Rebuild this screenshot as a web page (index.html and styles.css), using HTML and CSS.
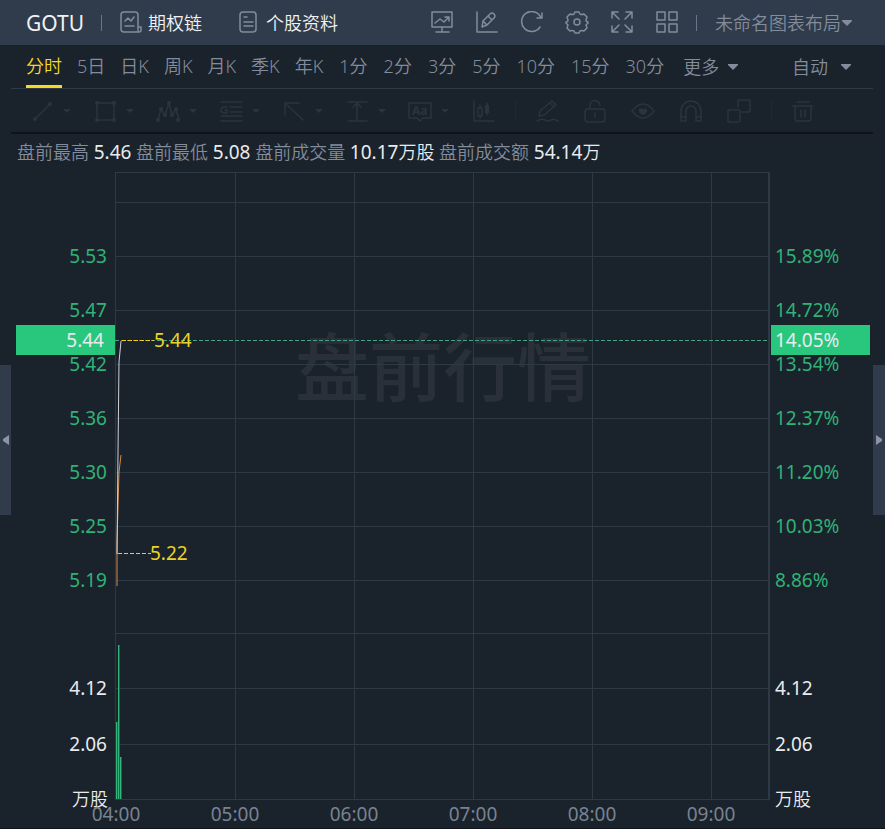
FILE: index.html
```html
<!DOCTYPE html>
<html lang="zh-CN">
<head>
<meta charset="utf-8">
<meta name="viewport" content="width=device-width, initial-scale=1">
<title>GOTU 分时</title>
<link rel="stylesheet" href="styles.css">
</head>
<body>
<svg class="defs" aria-hidden="true">
  <symbol id="caret" viewBox="0 0 12 8"><path d="M1 1h10v1L6 7 1 2z"/></symbol>
</svg>

<header class="topbar">
  <h1 class="symbol">GOTU</h1>
  <span class="bar-divider"></span>
  <a class="toplink" href="#options">
    <svg class="icon" width="24" height="24" viewBox="0 0 24 24"><path d="M19 16V4q0-3-3-3H5Q2 1 2 4v14q0 3 3 3h15q2 0 2-2v-3h-3v3q0 2 1 2M6 10l3-3 3 3 3-4M6 15h9"/></svg>
    <span>期权链</span>
  </a>
  <a class="toplink toplink-info" href="#profile">
    <svg class="icon" width="20" height="24" viewBox="0 0 20 24"><rect x="2" y="1" width="16" height="20" rx="3"/><path d="M6 6h3M6 11h9M6 15h9"/></svg>
    <span>个股资料</span>
  </a>
  <div class="actions">
    <button class="action" aria-label="模拟"><svg class="icon" width="24" height="24" viewBox="0 0 24 24"><path d="M2 1h20v15H2zM12 16v5M6 21h13M5 12l5-4 4 3 5-5M15 6h4v4"/></svg></button>
    <button class="action" aria-label="画线"><svg class="icon" width="24" height="24" viewBox="0 0 24 24"><path d="M2 1v20h20M7 16l1-6 7-7q2-2 4 0t0 4l-7 7zM13 5l4 4M8 10l4 4"/></svg></button>
    <button class="action" aria-label="刷新"><svg class="icon" width="24" height="24" viewBox="0 0 24 24"><path d="M20 16a10 10 0 1 1 1-9M22 2v5h-5"/></svg></button>
    <button class="action" aria-label="设置"><svg class="icon" width="24" height="24" viewBox="0 0 24 24"><circle cx="12" cy="11" r="3"/><path d="M10 1h4l1 2q2 1 4 0l3 3-1 3q0 2 2 2v1l-2 2 1 3-3 3q-2-1-4 0l-1 2h-4l-1-2q-2-1-4 0l-3-3 1-3-2-2v-1q2 0 2-2L2 6l3-3q2 1 4 0z"/></svg></button>
    <button class="action" aria-label="全屏"><svg class="icon" width="24" height="24" viewBox="0 0 24 24"><path d="M2 7V1h6M2 1l7 7M16 1h6v6M22 1l-7 7M2 15v6h6M2 21l7-7M22 15v6h-6M22 21l-7-7"/></svg></button>
    <button class="action" aria-label="多图"><svg class="icon" width="24" height="24" viewBox="0 0 24 24"><path d="M2 1h8v8H2zM14 1h8v8h-8zM2 13h8v8H2zM14 13h8v8h-8z"/></svg></button>
    <span class="bar-divider"></span>
    <label class="picker layout-picker">
      <select aria-label="图表布局"><option>未命名图表布局</option></select>
      <svg class="caret" width="12" height="8"><use href="#caret"/></svg>
    </label>
  </div>
</header>

<nav class="periods">
  <div class="tabs">
    <button class="tab tab-active">分时</button>
    <button class="tab">5日</button>
    <button class="tab">日K</button>
    <button class="tab">周K</button>
    <button class="tab">月K</button>
    <button class="tab">季K</button>
    <button class="tab">年K</button>
  </div>
  <div class="tabs minutes">
    <button class="tab">1分</button>
    <button class="tab">2分</button>
    <button class="tab">3分</button>
    <button class="tab">5分</button>
    <button class="tab">10分</button>
    <button class="tab">15分</button>
    <button class="tab">30分</button>
    <label class="picker more-picker">
      <select aria-label="更多周期"><option>更多</option></select>
      <svg class="caret" width="12" height="8"><use href="#caret"/></svg>
    </label>
  </div>
  <label class="picker auto-picker">
    <select aria-label="缩放"><option>自动</option></select>
    <svg class="caret" width="12" height="8"><use href="#caret"/></svg>
  </label>
</nav>

<div class="tools">
  <button class="tool" aria-label="线段"><svg class="icon" width="24" height="24" viewBox="0 0 24 24"><path d="M5 20L20 5"/><circle class="dot" cx="5" cy="20" r="2"/><circle class="dot" cx="20" cy="5" r="2"/></svg><svg class="caret" width="8" height="6"><use href="#caret"/></svg></button>
  <button class="tool" aria-label="矩形"><svg class="icon" width="24" height="24" viewBox="0 0 24 24"><path d="M4 4h17v17H4z"/><circle class="dot" cx="4" cy="4" r="2"/><circle class="dot" cx="21" cy="4" r="2"/><circle class="dot" cx="4" cy="21" r="2"/><circle class="dot" cx="21" cy="21" r="2"/></svg><svg class="caret" width="8" height="6"><use href="#caret"/></svg></button>
  <button class="tool" aria-label="形态"><svg class="icon" width="24" height="24" viewBox="0 0 24 24"><path d="M2 21L5 10l4 6 4-12 3 12 4-6 3 11"/><circle class="dot" cx="2" cy="21" r="2"/><circle class="dot" cx="5" cy="10" r="2"/><circle class="dot" cx="9" cy="16" r="2"/><circle class="dot" cx="13" cy="4" r="2"/><circle class="dot" cx="16" cy="16" r="2"/><circle class="dot" cx="20" cy="10" r="2"/><circle class="dot" cx="22" cy="21" r="2"/></svg><svg class="caret" width="8" height="6"><use href="#caret"/></svg></button>
  <button class="tool" aria-label="江恩"><svg class="icon" width="24" height="24" viewBox="0 0 24 24"><path d="M2 3h21M11 8h12M11 13h12M2 17h21M2 22h21M8 8H5Q2 8 2 11t3 3h3v-3H6"/></svg><svg class="caret" width="8" height="6"><use href="#caret"/></svg></button>
  <button class="tool" aria-label="箭头"><svg class="icon" width="24" height="24" viewBox="0 0 24 24"><path d="M3 16V4h14M3 4l18 17"/></svg><svg class="caret" width="8" height="6"><use href="#caret"/></svg></button>
  <button class="tool" aria-label="测量"><svg class="icon" width="24" height="24" viewBox="0 0 24 24"><path d="M3 3h19M3 22h19M12 22V4M8 8l4-4 4 4"/></svg><svg class="caret" width="8" height="6"><use href="#caret"/></svg></button>
  <button class="tool" aria-label="文字"><svg class="icon" width="24" height="24" viewBox="0 0 24 24"><path d="M1 4h22v15h-8l-3 3-3-3H1z"/><text class="tool-letter" x="4" y="16">Aa</text></svg><svg class="caret" width="8" height="6"><use href="#caret"/></svg></button>
  <button class="tool tool-last" aria-label="K线"><svg class="icon" width="24" height="24" viewBox="0 0 24 24"><path d="M3 2v20h20M9 6v3M9 17v2M16 4v2M16 14v2M7 9h4v8H7z"/><path class="dot" d="M14 6h4v8h-4z"/></svg></button>
  <span class="tool-divider divider-first"></span>
  <button class="tool-plain" aria-label="画笔"><svg class="icon" width="24" height="24" viewBox="0 0 24 24"><path d="M4 17l1-5L17 2l4 4L9 16zM15 4l4 4M2 22q4-3 8-1t6 0 7 1"/></svg></button>
  <button class="tool-plain" aria-label="锁定"><svg class="icon" width="24" height="24" viewBox="0 0 24 24"><rect x="2" y="10" width="20" height="13" rx="3"/><path d="M7 10V7a5 5 0 0 1 10-1M12 14v4"/></svg></button>
  <button class="tool-plain" aria-label="显示"><svg class="icon" width="24" height="24" viewBox="0 0 24 24"><path d="M1 12q11-14 22 0-11 14-22 0z"/><path class="dot" d="M9 9q2 2 3 0 1 2 3 0a4 4 0 1 1-6 0z"/></svg></button>
  <button class="tool-plain" aria-label="磁铁"><svg class="icon" width="24" height="24" viewBox="0 0 24 24"><path d="M2 22V12a10 10 0 0 1 20 0v10h-5V12a5 5 0 0 0-10 0v10zM2 18h5M17 18h5"/></svg></button>
  <button class="tool-plain" aria-label="复制"><svg class="icon" width="24" height="24" viewBox="0 0 24 24"><rect x="1" y="11" width="12" height="12" rx="1"/><path d="M11 8V2q0-1 1-1h10q1 0 1 1v10q0 1-1 1h-7"/></svg></button>
  <span class="tool-divider"></span>
  <button class="tool-plain" aria-label="删除"><svg class="icon" width="24" height="24" viewBox="0 0 24 24"><path d="M6 3h12M2 7h20M4 7v12q0 3 3 3h10q3 0 3-3V7M10 11v7M14 11v7"/></svg></button>
</div>

<p class="quote">盘前最高 <b>5.46</b> 盘前最低 <b>5.08</b> 盘前成交量 <b>10.17<span>万股</span></b> 盘前成交额 <b>54.14<span>万</span></b></p>

<main class="chart-area">
  <svg class="chart" viewBox="0 0 885 657" role="img" aria-label="GOTU 盘前分时走势">
    <text class="watermark" x="295" y="223">盘前行情</text>
    <path class="grid" d="M115 0h654v1H115zM115 30h654v1H115zM115 84h654v1H115zM115 138h654v1H115zM115 192h654v1H115zM115 246h654v1H115zM115 300h654v1H115zM115 354h654v1H115zM115 408h654v1H115zM115 461h654v1H115zM115 516h654v1H115zM115 572h654v1H115zM115 627h654v1H115z"/>
    <path class="grid" d="M115 0h1v628h-1zM235 0h1v628h-1zM354 0h1v628h-1zM473 0h1v628h-1zM592 0h1v628h-1zM711 0h1v628h-1zM768 0h2v628h-2z"/>
    <path class="volume" d="M116 550h1v77h-1zM118 473h1v154h-1zM120 585h1v42h-1z"/>
    <path class="volume-edge" d="M117 550h1v77h-1zM119 473h1v154h-1zM121 585h1v42h-1z"/>
    <polyline class="average" points="117,414 117,370 119,300 121,283"/>
    <polyline class="price" points="117,382 118,280 119,190 121,169"/>
    <g class="dashes">
      <path class="dash-last" d="M115 168H768"/>
      <path class="dash-mark" d="M122 168H154M118 381H151"/>
    </g>
    <g class="mark"><text x="154" y="175">5.44</text><text x="150" y="388">5.22</text></g>
    <g class="up left">
      <text x="107" y="91">5.53</text><text x="107" y="145">5.47</text><text x="107" y="199">5.42</text><text x="107" y="253">5.36</text><text x="107" y="307">5.30</text><text x="107" y="361">5.25</text><text x="107" y="415">5.19</text>
    </g>
    <g class="up">
      <text x="775" y="91">15.89%</text><text x="775" y="145">14.72%</text><text x="775" y="199">13.54%</text><text x="775" y="253">12.37%</text><text x="775" y="307">11.20%</text><text x="775" y="361">10.03%</text><text x="775" y="415">8.86%</text>
    </g>
    <rect class="tag" x="16" y="153" width="99" height="30"/>
    <rect class="tag" x="771" y="153" width="99" height="30"/>
    <g class="bright">
      <text class="end" x="104" y="175">5.44</text><text x="775" y="175">14.05%</text>
      <text class="end" x="107" y="523">4.12</text><text class="end" x="107" y="579">2.06</text><text class="end unit" x="108" y="634">万股</text>
      <text x="775" y="523">4.12</text><text x="775" y="579">2.06</text><text class="unit" x="775" y="634">万股</text>
    </g>
    <g class="hours">
      <text x="116" y="649">04:00</text><text x="235" y="649">05:00</text><text x="354" y="649">06:00</text><text x="473" y="649">07:00</text><text x="592" y="649">08:00</text><text x="711" y="649">09:00</text>
    </g>
    <rect class="base" x="0" y="656" width="885" height="1"/>
  </svg>
</main>

<button class="handle handle-left" aria-label="展开左栏"><svg width="6" height="10" viewBox="0 0 6 10"><path d="M6 0v10L0 6V4z"/></svg></button>
<button class="handle handle-right" aria-label="展开右栏"><svg width="6" height="10" viewBox="0 0 6 10"><path d="M0 0v10l6-4V4z"/></svg></button>
</body>
</html>
```
FILE: styles.css
```css
* { box-sizing: border-box; }

body {
  position: relative;
  margin: 0;
  background: #1a222b;
  color: #828c9c;
  font-family: "Noto Sans", "Noto Sans CJK SC", sans-serif;
  font-size: 18px;
  font-weight: 350;
  line-height: 24px;
}

button, select {
  margin: 0;
  padding: 0;
  border: 0;
  background: none;
  color: inherit;
  font: inherit;
  appearance: none;
}

svg { display: block; }
.defs { position: absolute; width: 0; height: 0; }

.icon {
  flex: none;
  fill: none;
  stroke: currentColor;
  stroke-width: 1.5;
  stroke-linecap: round;
  stroke-linejoin: round;
}

.icon .dot { fill: currentColor; stroke: none; }
.caret { flex: none; fill: currentColor; }

.topbar {
  display: flex;
  align-items: center;
  height: 45px;
  padding: 0 32px 0 26px;
  background: #303b4b;
}

.symbol {
  margin: 0;
  color: #f0f2f5;
  font-size: 21px;
  font-weight: 400;
}

.bar-divider { width: 1px; height: 16px; background: #69758a; }
.symbol + .bar-divider { margin: 0 17px; }

.toplink {
  display: flex;
  align-items: center;
  gap: 5px;
  color: #828c9c;
  text-decoration: none;
}

.toplink span { color: #f0f2f5; }
.toplink-info { margin-left: 36px; gap: 8px; }

.actions { display: flex; align-items: center; margin-left: auto; }
.action { display: flex; justify-content: center; width: 45px; }
.actions .bar-divider { margin: 0 18px 0 7px; }

.picker { display: flex; align-items: center; }

.periods {
  display: flex;
  height: 44px;
  margin: 0 12px 0 11px;
  padding: 0 21px 0 15px;
  border-bottom: 1px solid #2e3a48;
}

.tabs { display: flex; gap: 15px; margin-right: 16px; }
.minutes { gap: 16px; margin-right: 0; }

.tab {
  height: 43px;
  padding-top: 1px;
  border-bottom: 3px solid transparent;
  font-weight: 400;
  white-space: nowrap;
}

.tab:lang(zh) { font-weight: 350; }
.tab-active { border-color: #f5da22; color: #f5da22; }
.more-picker, .auto-picker { gap: 8px; }
.more-picker { margin-left: 3px; }
.auto-picker { gap: 12px; margin-left: auto; }

.tools {
  display: flex;
  align-items: center;
  height: 45px;
  margin: 0 12px 0 11px;
  padding-left: 19px;
  border-bottom: 2px solid #0f1319;
  color: #2b333f;
}

.tool {
  display: flex;
  flex: none;
  align-items: center;
  gap: 9px;
  width: 63px;
}

.tool-last { width: 24px; }
.tool-plain { display: flex; flex: none; justify-content: center; width: 48px; }
.tool-letter { fill: currentColor; stroke: none; font-size: 12px; font-weight: 700; }
.tool-divider { width: 1px; height: 20px; margin: 0 7px 0 8px; background: #202832; }
.divider-first { margin-left: 20px; }

.quote { margin: 0; padding: 6px 17px 8px; white-space: nowrap; }
.quote b { color: #e9ebee; font-size: 19px; font-weight: 400; }
.quote span { font-size: 18px; font-weight: 350; }

.chart { width: 100%; height: auto; font-size: 19px; font-weight: 400; }
.watermark { fill: #2a303a; font-size: 74px; font-weight: 500; }
.grid { fill: #2d3945; }
.volume { fill: #35b57c; }
.volume-edge { fill: #216548; }
.average { fill: none; stroke: #d48a49; }
.price { fill: none; stroke: #d0d2d6; }
.dashes { stroke-dasharray: 4 2; shape-rendering: crispEdges; }
.dash-last { stroke: #43a383; }
.dash-mark { fill: none; stroke: #e8cf25; }
.mark { fill: #ecd226; }
.up { fill: #30b277; }
.left, .end { text-anchor: end; }
.tag { fill: #29c77e; }
.bright { fill: #e9ebee; }
.unit { font-size: 18px; font-weight: 350; }
.hours { fill: #788292; text-anchor: middle; }
.base { fill: #10151c; }

.handle {
  position: absolute;
  top: 365px;
  display: flex;
  align-items: center;
  justify-content: center;
  width: 11px;
  height: 150px;
  background: #303b4b;
}

.handle svg { fill: #8b95a5; }
.handle-left { left: 0; }
.handle-right { right: 0; width: 12px; }
```
